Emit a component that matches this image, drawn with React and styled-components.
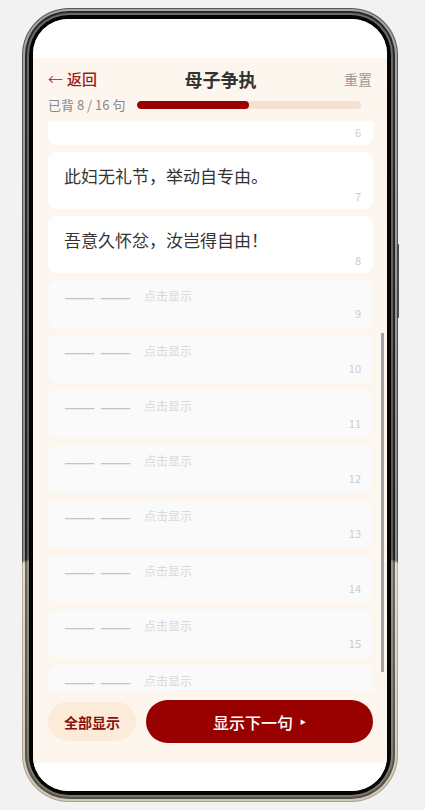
import React, { useLayoutEffect, useEffect, useRef } from 'react';
import styled, { createGlobalStyle } from 'styled-components';

const GlobalStyle = createGlobalStyle`
  html, body { margin: 0; padding: 0; background: #f2f2f2; }
  body { font-family: "Noto Sans CJK SC", "Noto Sans", sans-serif; }
  * { box-sizing: border-box; }
`;

const LINES = [
  '府吏得闻之，堂上启阿母：',
  '儿已薄禄相，幸复得此妇，',
  '结发同枕席，黄泉共为友。',
  '共事二三年，始尔未为久，',
  '女行无偏斜，何意致不厚？',
  '阿母谓府吏：何乃太区区！',
  '此妇无礼节，举动自专由。',
  '吾意久怀忿，汝岂得自由！',
  '东家有贤女，自名秦罗敷，',
  '可怜体无比，阿母为汝求。',
  '便可速遣之，遣去慎莫留！',
  '府吏长跪告：伏惟启阿母，',
  '今若遣此妇，终老不复取！',
  '阿母得闻之，槌床便大怒：',
  '小子无所畏，何敢助妇语！',
  '吾已失恩义，会不相从许！',
];
const REVEALED = 8;
const SCROLL_TOP = 353;

const Stage = styled.div`
  width: 425px;
  height: 810px;
  padding: 8px 0 0 22px;
  display: flex;
  align-items: flex-start;
`;

const Phone = styled.div`
  position: relative;
  width: 376px;
  height: 794px;
  border-radius: 47px;
  padding: 1px;
  background: linear-gradient(180deg, #5a5a5a 0%, #4a4a4a 69.6%, #b9b09d 70%, #a89f8c 100%);
`;

const SideButton = styled.div`
  position: absolute;
  right: -1px;
  top: 236px;
  width: 2px;
  height: 74px;
  border-radius: 0 1px 1px 0;
  background: #4a4a4a;
`;

const Rim = styled.div`
  height: 100%;
  border-radius: ${(p) => p.$r}px;
  padding: ${(p) => p.$pad}px;
  background: ${(p) => p.$bg};
`;

const Screen = styled.div`
  height: 100%;
  border-radius: 35px;
  background: #fff;
  overflow: hidden;
  display: flex;
  flex-direction: column;
`;

const StatusArea = styled.div`
  height: 39px;
  flex: none;
  background: #fff;
`;

const HomeArea = styled.div`
  height: 28px;
  flex: none;
  background: #fff;
`;

const AppBody = styled.div`
  flex: 1;
  min-height: 0;
  background: #fdf6ee;
  display: flex;
  flex-direction: column;
`;

const Header = styled.div`
  flex: none;
  padding: 10px 15px 8px 15px;
  display: flex;
  flex-direction: column;
  gap: 7px;
`;

const NavRow = styled.div`
  height: 22px;
  display: flex;
  align-items: center;
  justify-content: space-between;
`;

const BackLink = styled.span`
  display: flex;
  align-items: center;
  font-size: 15px;
  font-weight: 500;
  color: #9b1c1c;
  line-height: 22px;
`;

const BackArrow = styled.span`
  font-weight: 300;
  margin-right: 4px;
`;

const Title = styled.span`
  font-size: 18px;
  font-weight: 700;
  color: #333;
  line-height: 22px;
`;

const ResetLink = styled.span`
  font-size: 14px;
  color: #999;
  line-height: 22px;
`;

const ProgressRow = styled.div`
  height: 16px;
  display: flex;
  align-items: center;
  gap: 12px;
  padding-right: 11px;
`;

const ProgressText = styled.span`
  font-size: 13px;
  color: #888;
  line-height: 16px;
  white-space: nowrap;
`;

const Track = styled.div`
  flex: 1;
  height: 8px;
  border-radius: 4px;
  background: #f4e1cf;
  overflow: hidden;
`;

const Fill = styled.div`
  height: 100%;
  border-radius: 4px;
  background: #990000;
`;

const ListWrap = styled.div`
  position: relative;
  flex: 1;
  min-height: 0;
  display: flex;
  flex-direction: column;
`;

const List = styled.div`
  flex: 1;
  min-height: 0;
  overflow-y: auto;
  scrollbar-width: none;
  padding: 0 14px 0 15px;
  display: flex;
  flex-direction: column;
  gap: 7px;
  &::-webkit-scrollbar { display: none; }
`;

const ScrollThumb = styled.div`
  position: absolute;
  right: 3px;
  width: 3px;
  top: ${(p) => p.$top}px;
  height: ${(p) => p.$h}px;
  background: #a3a3a3;
`;

const Card = styled.div`
  flex: none;
  border-radius: 9px;
  background: ${(p) => (p.$hidden ? '#fafafa' : '#fff')};
  padding: ${(p) => (p.$hidden ? '8px 12px 8px 16px' : '12px 12px 6px 16px')};
`;

const LineText = styled.div`
  font-size: 17px;
  line-height: 24px;
  height: 24px;
  color: #333;
  white-space: nowrap;
`;

const Placeholder = styled.div`
  display: flex;
  align-items: center;
  height: 16px;
  white-space: nowrap;
  overflow: hidden;
`;

const Dashes = styled.span`
  font-size: 18.5px;
  line-height: 16px;
  color: #c4c4c4;
  margin-right: ${(p) => p.$gap}px;
`;

const Hint = styled.span`
  font-size: 12px;
  line-height: 16px;
  color: #d9d9d9;
`;

const Num = styled.div`
  text-align: right;
  font-size: 11px;
  line-height: 14px;
  height: 14px;
  color: #cccccc;
  margin-top: ${(p) => (p.$hidden ? 2 : 1)}px;
`;

const BottomBar = styled.div`
  flex: none;
  padding: 8px 14px 20px 15px;
  display: flex;
  align-items: center;
  gap: 10px;
`;

const AllButton = styled.button`
  height: 39px;
  padding: 0 16px;
  border: none;
  border-radius: 20px;
  background: #fdebd9;
  color: #8b1111;
  font-family: inherit;
  font-size: 14px;
  font-weight: 700;
  white-space: nowrap;
`;

const NextButton = styled.button`
  flex: 1;
  height: 43px;
  border: none;
  border-radius: 22px;
  background: #990000;
  color: #fff;
  font-family: inherit;
  font-size: 16px;
  font-weight: 500;
  display: flex;
  align-items: center;
  justify-content: center;
`;

const Arrow = styled.span`
  font-size: 6px;
  margin-left: 7px;
`;

export default function App() {
  const listRef = useRef(null);
  const setScroll = () => {
    if (listRef.current) listRef.current.scrollTop = SCROLL_TOP;
  };
  useLayoutEffect(setScroll, []);
  useEffect(setScroll, []);

  const progress = `已背 ${REVEALED} / ${LINES.length} 句`;

  return (
    <>
      <GlobalStyle />
      <Stage>
        <Phone>
          <SideButton />
          <Rim $r={46} $pad={2} $bg="linear-gradient(180deg, #a6a6a6 0%, #8a8a8a 69.6%, #e4ddcf 70%, #d2cab8 100%)">
            <Rim $r={44} $pad={2} $bg="linear-gradient(180deg, #2a2a2a 0%, #202020 69.6%, #6f6a60 70%, #555049 100%)">
              <Rim $r={42} $pad={2} $bg="linear-gradient(180deg, #6c6c6c 0%, #5a5a5a 69.6%, #9a9486 70%, #7c776c 100%)">
                <Rim $r={40} $pad={4} $bg="#050505">
                  <Screen>
                    <StatusArea />
                    <AppBody>
                      <Header>
                        <NavRow>
                          <BackLink>
                            <BackArrow>←</BackArrow>返回
                          </BackLink>
                          <Title>母子争执</Title>
                          <ResetLink>重置</ResetLink>
                        </NavRow>
                        <ProgressRow>
                          <ProgressText>{progress}</ProgressText>
                          <Track>
                            <Fill style={{ width: `${(REVEALED / LINES.length) * 100}%` }} />
                          </Track>
                        </ProgressRow>
                      </Header>
                      <ListWrap>
                        <List ref={listRef}>
                          {LINES.map((line, i) => {
                            const hidden = i >= REVEALED;
                            return (
                              <Card key={i} $hidden={hidden}>
                                {hidden ? (
                                  <Placeholder>
                                    <Dashes $gap={5}>——</Dashes>
                                    <Dashes $gap={13}>——</Dashes>
                                    <Hint>点击显示</Hint>
                                  </Placeholder>
                                ) : (
                                  <LineText>{line}</LineText>
                                )}
                                <Num $hidden={hidden}>{i + 1}</Num>
                              </Card>
                            );
                          })}
                        </List>
                        <ScrollThumb $top={212} $h={339} />
                      </ListWrap>
                      <BottomBar>
                        <AllButton>全部显示</AllButton>
                        <NextButton>
                          显示下一句<Arrow>▶</Arrow>
                        </NextButton>
                      </BottomBar>
                    </AppBody>
                    <HomeArea />
                  </Screen>
                </Rim>
              </Rim>
            </Rim>
          </Rim>
        </Phone>
      </Stage>
    </>
  );
}
